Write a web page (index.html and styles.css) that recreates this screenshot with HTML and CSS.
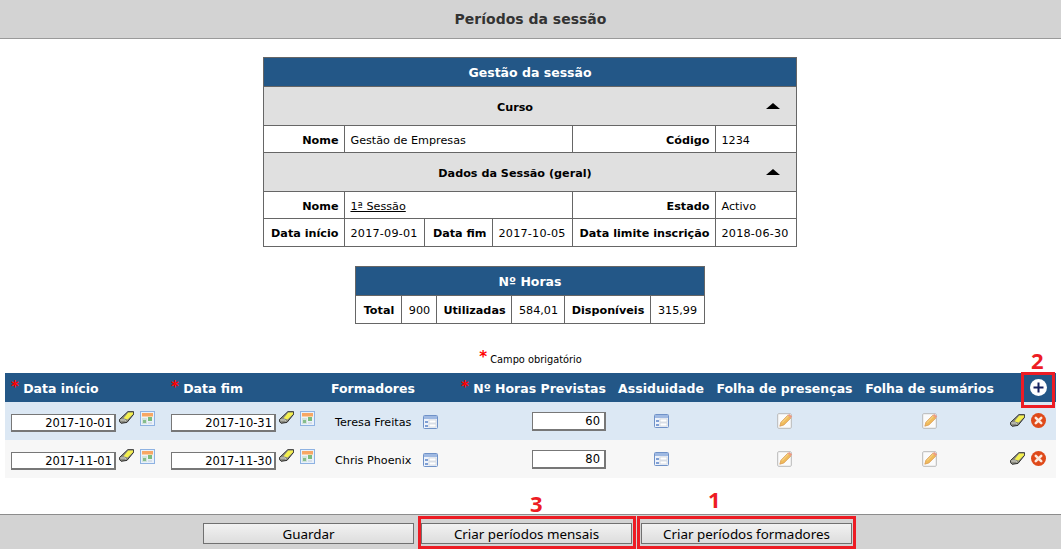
FILE: index.html
```html
<!DOCTYPE html>
<html lang="pt">
<head>
<meta charset="utf-8">
<title>Períodos da sessão</title>
<link rel="stylesheet" href="styles.css">
</head>
<body>
<svg class="defs" width="0" height="0" aria-hidden="true">
  <symbol id="i-eraser" viewBox="0 0 15 13">
    <path d="M.6 8.4 8.8.7h5.8v2.6L8 11.4l-5.8.9-1.6-1.6z" fill="#8b8b80" stroke="#1c1c1c" stroke-width=".9"/>
    <path d="M4.6 7.2 9.2 1.4h4.9v1.7L8.6 8.6z" fill="#f4f04e"/>
    <path d="M1.2 9h4.4l1.6 1.4" fill="none" stroke="#e4e4dc" stroke-width=".9"/>
  </symbol>
  <symbol id="i-cal" viewBox="0 0 15 15">
    <rect x=".5" y=".5" width="14" height="14" fill="#e9f1fa" stroke="#8eb2e2"/>
    <rect x="2" y="2" width="11" height="3" fill="#f7a765"/>
    <rect x="2" y="5" width="11" height="1" fill="#fbd0a6"/>
    <rect x="2" y="7" width="5" height="6" fill="#d2e3dc"/>
    <rect x="3" y="9" width="3" height="3" fill="#86bd8c"/>
    <rect x="8" y="6" width="4" height="4" fill="#7cbc7c"/>
    <rect x="8" y="11" width="4" height="2" fill="#d7dfe9"/>
  </symbol>
  <symbol id="i-table" viewBox="0 0 15 14">
    <rect x=".5" y=".5" width="14" height="13" rx="1" fill="#eef3fb" stroke="#7092c8"/>
    <rect x="1" y="1" width="13" height="3" fill="#9fb9e2"/>
    <rect x="2" y="6" width="3" height="2" fill="#7f9fd4"/>
    <rect x="2" y="10" width="3" height="2" fill="#7f9fd4"/>
    <rect x="6" y="5" width="7" height="3" fill="#fff" stroke="#c4c9d2" stroke-width=".6"/>
    <rect x="6" y="9" width="7" height="3" fill="#fff" stroke="#c4c9d2" stroke-width=".6"/>
  </symbol>
  <symbol id="i-note" viewBox="0 0 16 16">
    <rect x=".7" y=".7" width="13.6" height="14.6" rx="1" fill="#fbfbfb" stroke="#b8b8b8"/>
    <path d="M2.8 13.2 4 9.2l6.8-6.9 3 2.8-6.9 6.8z" fill="#f0bc5c" stroke="#d9984e" stroke-width=".8"/>
    <path d="M5 9.6 11.4 3" stroke="#f9dc94" stroke-width="1" fill="none"/>
    <path d="m10.8 2.3 1.4-1.4 3 2.6-1.4 1.6z" fill="#eb9a82"/>
  </symbol>
  <symbol id="i-del" viewBox="0 0 15 15">
    <circle cx="7.5" cy="7.5" r="7.5" fill="#df4a1a"/>
    <path d="m4.8 4.8 5.4 5.4m0-5.4-5.4 5.4" stroke="#fbe9de" stroke-width="2.6" stroke-linecap="round"/>
  </symbol>
  <symbol id="i-plus" viewBox="0 0 17 17">
    <circle cx="8.5" cy="8.5" r="8.5" fill="#fff"/>
    <path d="M8.5 3.5v10M3.5 8.5h10" stroke="#14205f" stroke-width="2"/>
  </symbol>
</svg>

<div class="page">
  <header class="topbar">Períodos da sessão</header>

  <main class="content">
    <div class="centered">
      <table class="grid session">
        <colgroup>
          <col class="s1"><col class="s2"><col class="s3"><col class="s4"><col class="s5"><col class="s6">
        </colgroup>
        <tr class="head"><th colspan="6">Gestão da sessão</th></tr>
        <tr class="section">
          <th colspan="6"><span class="section-title">Curso</span><span class="caret"></span></th>
        </tr>
        <tr class="row-a">
          <th class="lab">Nome</th><td colspan="3">Gestão de Empresas</td>
          <th class="lab">Código</th><td>1234</td>
        </tr>
        <tr class="section">
          <th colspan="6"><span class="section-title">Dados da Sessão (geral)</span><span class="caret"></span></th>
        </tr>
        <tr class="row-a">
          <th class="lab">Nome</th><td colspan="3"><a href="#" class="link">1ª Sessão</a></td>
          <th class="lab">Estado</th><td>Activo</td>
        </tr>
        <tr class="row-b">
          <th class="lab">Data início</th><td class="dateval">2017-09-01</td>
          <th class="lab">Data fim</th><td class="dateval">2017-10-05</td>
          <th class="lab">Data limite inscrição</th><td class="dateval">2018-06-30</td>
        </tr>
      </table>

      <table class="grid hours">
        <colgroup>
          <col class="h1"><col class="h2"><col class="h3"><col class="h4"><col class="h5"><col class="h6">
        </colgroup>
        <tr class="head"><th colspan="6">Nº Horas</th></tr>
        <tr class="row-b">
          <th class="mid">Total</th><td class="mid">900</td>
          <th class="mid">Utilizadas</th><td class="mid">584,01</td>
          <th class="mid">Disponíveis</th><td class="mid">315,99</td>
        </tr>
      </table>
    </div>

    <p class="required"><span class="star">*</span> Campo obrigatório</p>

    <div class="periods-wrap">
      <table class="periods">
        <colgroup>
          <col class="p1"><col class="p2"><col class="p3"><col class="p4"><col class="p5"><col class="p6"><col class="p7"><col class="p8">
        </colgroup>
        <tr class="phead">
          <th class="left"><span class="star">*</span> Data início</th>
          <th class="left"><span class="star">*</span> Data fim</th>
          <th class="left">Formadores</th>
          <th class="right"><span class="star">*</span> Nº Horas Previstas</th>
          <th>Assiduidade</th>
          <th>Folha de presenças</th>
          <th>Folha de sumários</th>
          <th class="end"><svg class="ic-plus"><use href="#i-plus"/></svg></th>
        </tr>
        <tr class="odd">
          <td class="left"><span class="datecell"><input class="field date" value="2017-10-01"><svg class="ic-eraser"><use href="#i-eraser"/></svg><svg class="ic-cal"><use href="#i-cal"/></svg></span></td>
          <td class="left"><span class="datecell"><input class="field date" value="2017-10-31"><svg class="ic-eraser"><use href="#i-eraser"/></svg><svg class="ic-cal"><use href="#i-cal"/></svg></span></td>
          <td class="left"><span class="person">Teresa Freitas<svg class="ic-table"><use href="#i-table"/></svg></span></td>
          <td class="right"><input class="field num" value="60"></td>
          <td><svg class="ic-table"><use href="#i-table"/></svg></td>
          <td><svg class="ic-note"><use href="#i-note"/></svg></td>
          <td><svg class="ic-note"><use href="#i-note"/></svg></td>
          <td class="end"><span class="actions"><svg class="ic-eraser"><use href="#i-eraser"/></svg><svg class="ic-del"><use href="#i-del"/></svg></span></td>
        </tr>
        <tr class="even">
          <td class="left"><span class="datecell"><input class="field date" value="2017-11-01"><svg class="ic-eraser"><use href="#i-eraser"/></svg><svg class="ic-cal"><use href="#i-cal"/></svg></span></td>
          <td class="left"><span class="datecell"><input class="field date" value="2017-11-30"><svg class="ic-eraser"><use href="#i-eraser"/></svg><svg class="ic-cal"><use href="#i-cal"/></svg></span></td>
          <td class="left"><span class="person">Chris Phoenix<svg class="ic-table"><use href="#i-table"/></svg></span></td>
          <td class="right"><input class="field num" value="80"></td>
          <td><svg class="ic-table"><use href="#i-table"/></svg></td>
          <td><svg class="ic-note"><use href="#i-note"/></svg></td>
          <td><svg class="ic-note"><use href="#i-note"/></svg></td>
          <td class="end"><span class="actions"><svg class="ic-eraser"><use href="#i-eraser"/></svg><svg class="ic-del"><use href="#i-del"/></svg></span></td>
        </tr>
      </table>
    </div>
  </main>

  <footer class="footer">
    <button class="btn btn-save">Guardar</button>
    <button class="btn btn-month">Criar períodos mensais</button>
    <button class="btn btn-form">Criar períodos formadores</button>
  </footer>

  <span class="mark mark-2">2</span>
  <span class="box box-2"></span>
  <span class="mark mark-3">3</span>
  <span class="box box-3"></span>
  <span class="mark mark-1">1</span>
  <span class="box box-1"></span>
</div>
</body>
</html>
```

FILE: styles.css
```css
* { box-sizing: border-box; }
html, body { margin: 0; padding: 0; }
body {
  font-family: "DejaVu Sans", Verdana, sans-serif;
  font-size: 11.2px;
  color: #000;
  background: #fff;
}
.defs { position: absolute; }
.page {
  position: relative;
  height: 549px;
  display: flex;
  flex-direction: column;
  overflow: hidden;
}
.topbar {
  height: 39px;
  flex: none;
  background: #d3d3d3;
  border-bottom: 1px solid #9a9a9a;
  color: #333;
  font-size: 14px;
  font-weight: bold;
  display: flex;
  align-items: center;
  justify-content: center;
}
.content {
  flex: 1;
  padding-top: 18px;
}
.centered { padding-right: 1px; }
.grid {
  border-collapse: collapse;
  table-layout: fixed;
  margin: 0 auto;
}
.grid th, .grid td {
  border: 1px solid #666;
  padding: 2px 6px 0;
  white-space: nowrap;
}
.grid td { text-align: left; padding-left: 5px; }
.grid .mid { text-align: center; padding: 2px 0 0; }
.dateval { letter-spacing: .22px; }
.session { width: 532px; }
.s1 { width: 81px; }
.s2 { width: 80px; }
.s3 { width: 68px; }
.s4 { width: 80px; }
.s5 { width: 143px; }
.s6 { width: 80px; }
.grid .head th {
  background: #235787;
  color: #fff;
  font-size: 12.5px;
  height: 29px;
  padding-top: 0;
  text-align: center;
}
.grid .section th {
  background: #e0e0e0;
  height: 39px;
  text-align: center;
  position: relative;
  padding-right: 36px;
}
.caret {
  position: absolute;
  right: 16px;
  top: 16px;
  width: 0;
  height: 0;
  border-left: 7px solid transparent;
  border-right: 7px solid transparent;
  border-bottom: 6px solid #000;
}
.row-a th, .row-a td { height: 27px; }
.row-b th, .row-b td { height: 28px; }
.lab { text-align: right; }
.link { color: #000; text-decoration: underline; }

.hours { width: 348px; margin-top: 19px; }
.h1 { width: 46px; }
.h2 { width: 35px; }
.h3 { width: 75px; }
.h4 { width: 53px; }
.h5 { width: 86px; }
.h6 { width: 53px; }

.required {
  margin: 26px 0 0;
  height: 23px;
  font-size: 9.8px;
  text-align: center;
  line-height: 20px;
}
.star {
  color: #f00;
  font-size: 15px;
  font-weight: bold;
  line-height: 0;
  vertical-align: 1px;
}
.periods-wrap { padding: 0 5px; }
.periods {
  width: 1051px;
  border-collapse: collapse;
  table-layout: fixed;
}
.p1 { width: 160px; }
.p2 { width: 160px; }
.p3 { width: 128px; }
.p4 { width: 159px; }
.p5 { width: 98px; }
.p6 { width: 149px; }
.p7 { width: 141px; }
.p8 { width: 56px; }
.periods th, .periods td {
  padding: 0;
  text-align: center;
  white-space: nowrap;
}
.periods .left { text-align: left; padding-left: 6px; }
.periods .right { text-align: right; padding-right: 6px; }
.periods .end { text-align: right; padding-right: 10px; }
.phead th {
  background: #235787;
  color: #fff;
  font-size: 12.5px;
  height: 29px;
}
.periods .phead th { padding-top: 2px; }
.periods .phead .end { padding: 0 9px 0 0; }
.odd td { background: #dce8f4; height: 38px; }
.even td { background: #f7f7f7; height: 38px; }
.periods svg { vertical-align: middle; }
.datecell { display: inline-flex; align-items: flex-start; }
.person { display: inline-flex; align-items: center; gap: 12px; padding: 2px 0 0 4px; }
.actions { display: inline-flex; align-items: center; gap: 6px; }
.field {
  font-family: "DejaVu Sans", Verdana, sans-serif;
  font-size: 11.5px;
  text-align: right;
  background: #fff;
  color: #000;
  border-style: solid;
  border-color: #777;
  border-width: 1px 2px 2px 1px;
  border-radius: 0;
  padding: 0 2px 0 1px;
  margin: 0;
  outline: none;
}
.date { width: 105px; height: 18px; margin-top: 4px; }
.num { width: 74px; height: 19px; padding-right: 4px; }
.ic-eraser { width: 15px; height: 13px; margin: 1px 0 0 3px; }
.ic-cal { width: 15px; height: 15px; margin: 1px 0 0 6px; }
.ic-table { width: 15px; height: 14px; }
.ic-note { width: 16px; height: 16px; }
.ic-del { width: 15px; height: 15px; }
.ic-plus { width: 17px; height: 17px; }
.actions .ic-eraser { margin: 0; }

.footer {
  height: 35px;
  flex: none;
  background: #d3d3d3;
  border-top: 1px solid #8c8c8c;
  display: flex;
  align-items: flex-start;
  padding: 8px 0 0 203px;
  gap: 7px;
}
.btn {
  height: 21px;
  padding: 0;
  font-family: "Noto Sans", Tahoma, sans-serif;
  font-size: 13.4px;
  color: #000;
  background: linear-gradient(#f2f2f2, #dddddd);
  border: 1px solid #707070;
  border-radius: 0;
}
.btn-save { width: 211px; }
.btn-month { width: 211px; }
.btn-form { width: 211px; margin-left: 2px; }

.mark {
  position: absolute;
  font-family: "Open Sans", sans-serif;
  font-weight: bold;
  font-size: 22px;
  line-height: 1;
  color: #ed1c24;
}
.mark-2 { left: 1031px; top: 349px; }
.mark-3 { left: 530px; top: 492px; }
.mark-1 { left: 708px; top: 488px; }
.box {
  position: absolute;
  border: 3px solid #ed1c24;
}
.box-2 { left: 1021px; top: 372px; width: 34px; height: 36px; }
.box-3 { left: 418px; top: 516px; width: 218px; height: 33px; }
.box-1 { left: 637px; top: 516px; width: 219px; height: 33px; }
```
